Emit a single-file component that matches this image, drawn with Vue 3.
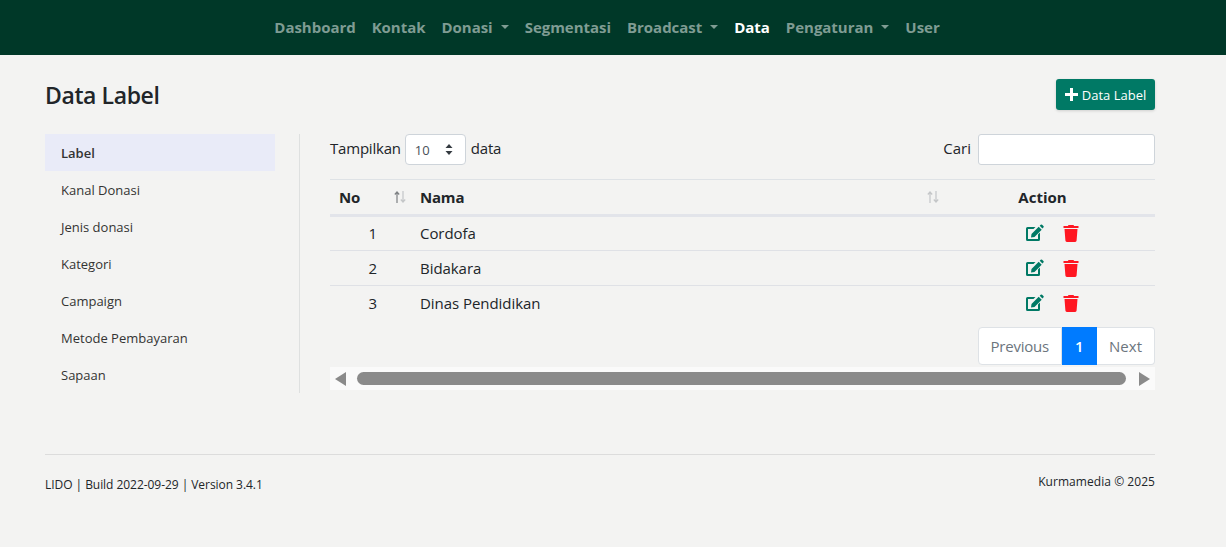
<script setup>
const nav = [
  { t: 'Dashboard' }, { t: 'Kontak' }, { t: 'Donasi', c: 1 }, { t: 'Segmentasi' },
  { t: 'Broadcast', c: 1 }, { t: 'Data', a: 1 }, { t: 'Pengaturan', c: 1 }, { t: 'User' }
]
const side = ['Label', 'Kanal Donasi', 'Jenis donasi', 'Kategori', 'Campaign', 'Metode Pembayaran', 'Sapaan']
const rows = [[1, 'Cordofa'], [2, 'Bidakara'], [3, 'Dinas Pendidikan']]
</script>

<template>
  <div class="page">
    <nav class="nav">
      <a v-for="n in nav" :key="n.t" class="nav-link" :class="{ active: n.a }">
        {{ n.t }}<i v-if="n.c" class="caret"></i>
      </a>
    </nav>
    <main class="wrap">
      <header class="head">
        <h1>Data Label</h1>
        <button class="add">
          <svg width="13" height="13" viewBox="0 0 13 13"><path d="M5 0h3v5h5v3H8v5H5V8H0V5h5z" fill="#fff" /></svg>
          Data Label
        </button>
      </header>
      <div class="body">
        <aside class="side">
          <a v-for="(s, i) in side" :key="s" class="side-item" :class="{ on: i === 0 }">{{ s }}</a>
        </aside>
        <section class="content">
          <div class="tools">
            <div class="len">
              <span>Tampilkan</span>
              <span class="select">10
                <svg width="8" height="11" viewBox="0 0 8 11"><path d="M4 0l3.500 4H.5zM4 11L.5 7h7z" fill="#343a40" /></svg>
              </span>
              <span class="after">data</span>
            </div>
            <div class="search">
              <span class="cari">Cari</span>
              <span class="input"></span>
            </div>
          </div>
          <table>
            <thead>
              <tr>
                <th class="c-no">No
                  <svg class="sort" width="12" height="12" viewBox="0 0 12 12" fill="none" stroke-width="1.200">
                    <path d="M3 12V1M.8 3.500L3 1l2.200 2.500" stroke="#7d8083" />
                    <path d="M9 0v11M6.800 8.500L9 11l2.200-2.500" stroke="#c4c6c8" />
                  </svg>
                </th>
                <th class="c-name">Nama
                  <svg class="sort" width="12" height="12" viewBox="0 0 12 12" fill="none" stroke="#c4c6c8" stroke-width="1.200">
                    <path d="M3 12V1M.8 3.500L3 1l2.200 2.500" />
                    <path d="M9 0v11M6.800 8.500L9 11l2.200-2.500" />
                  </svg>
                </th>
                <th class="c-act">Action</th>
              </tr>
            </thead>
            <tbody>
              <tr v-for="r in rows" :key="r[0]">
                <td class="num">{{ r[0] }}</td>
                <td>{{ r[1] }}</td>
                <td>
                  <div class="acts">
                    <svg width="19" height="18" viewBox="0 0 19 18">
                      <path d="M2 3h8.500l-2 2H3v10h10v-4.500l2-2V15.500a1.500 1.500 0 0 1-1.500 1.500h-11A1.500 1.500 0 0 1 1 15.500v-11A1.500 1.500 0 0 1 2.500 3z" fill="#007965" />
                      <path d="M13.700 2.800l3 3L9.500 13l-3.500.500.500-3.500zM14.700 1.800l1-1a1 1 0 0 1 1.400 0l1.300 1.300a1 1 0 0 1 0 1.400l-1 1z" fill="#007965" />
                    </svg>
                    <svg width="16" height="18" viewBox="0 0 16 18">
                      <path d="M5.500 1h5l.6 1H15.500v2H.5V2h4.400zM1.500 5h13l-.9 11.500a1.500 1.500 0 0 1-1.500 1.400H3.900a1.500 1.500 0 0 1-1.500-1.400z" fill="#ff1722" />
                    </svg>
                  </div>
                </td>
              </tr>
            </tbody>
          </table>
          <div class="pager">
            <a>Previous</a><a class="cur">1</a><a>Next</a>
          </div>
          <div class="scrollbar">
            <svg width="13" height="14" viewBox="0 0 13 14"><path d="M12 0v14L1 7z" fill="#8a8a8a" /></svg>
            <div class="thumb"></div>
            <svg width="13" height="14" viewBox="0 0 13 14"><path d="M1 0v14l11-7z" fill="#8a8a8a" /></svg>
          </div>
        </section>
      </div>
      <footer class="foot">
        <span class="fl">LIDO | Build 2022-09-29 | Version 3.4.1</span>
        <span class="fr">Kurmamedia © 2025</span>
      </footer>
    </main>
  </div>
</template>

<style>
html, body { margin: 0; background: #f3f3f2; }
</style>

<style scoped>
.page { min-height: 547px; background: #f3f3f2; color: #212529; font-family: "Open Sans", "Noto Sans", sans-serif; font-size: 15px; }
.nav { height: 55px; background: #003828; display: flex; align-items: center; justify-content: center; padding: 0 12px 2px 0; box-sizing: border-box; }
.nav-link { color: #7f9c93; font-weight: 700; font-size: 15px; letter-spacing: -.03px; padding: 0 8px; display: flex; align-items: center; white-space: nowrap; }
.nav-link.active { color: #fff; }
.caret { display: inline-block; margin-left: 8px; border-top: 4px solid #7f9c93; border-left: 4px solid transparent; border-right: 4px solid transparent; }
.wrap { width: 1110px; margin-left: 45px; }
.head { display: flex; justify-content: space-between; align-items: center; padding-top: 24px; height: 31px; margin-bottom: 24px; }
h1 { margin: 0; font-size: 23px; font-weight: 600; letter-spacing: -.4px; color: #212529; }
.add { width: 99px; height: 31px; background: #007965; color: #fff; border: 0; border-radius: 3px; font: 13px "Open Sans", sans-serif; display: flex; align-items: center; justify-content: center; gap: 4px; padding: 0; box-shadow: 0 1px 3px rgba(0,0,0,.15); white-space: nowrap; }
.body { display: flex; }
.side { width: 255px; border-right: 1px solid #dee0e0; height: 259px; padding-right: 24px; flex: none; box-sizing: border-box; display: flex; flex-direction: column; }
.side-item { height: 37px; line-height: 39px; padding-left: 16px; font-size: 13px; color: #333; white-space: nowrap; }
.side-item.on { background: #e9ebf8; font-weight: 600; }
.content { margin-left: 30px; width: 825px; }
.tools { display: flex; justify-content: space-between; align-items: center; height: 31px; margin-bottom: 14px; }
.len, .search { display: flex; align-items: center; }
.len { gap: 4px; line-height: 28px; }
.len > span:first-child, .len > span:last-child { letter-spacing: -.2px; margin-top: -3px; }
.len > .after { letter-spacing: 0; margin-left: 1px; }
.select { width: 61px; height: 31px; box-sizing: border-box; border: 1px solid #ced4da; background: #fff; border-radius: 4px; display: flex; align-items: center; justify-content: space-between; padding: 0 12px 0 9px; font-size: 13px; color: #495057; }
.search { gap: 7px; }
.cari { margin-top: -3px; line-height: 28px; }
.input { width: 177px; height: 31px; box-sizing: border-box; border: 1px solid #ced4da; background: #fff; border-radius: 3px; display: block; }
table { width: 825px; border-collapse: separate; border-spacing: 0; table-layout: fixed; }
th { height: 38px; padding: 0 0 1px; border-top: 1px solid #dee2e6; border-bottom: 3px solid #e2e4ea; font-weight: 700; text-align: left; position: relative; box-sizing: border-box; letter-spacing: -.2px; }
.c-no { width: 90px; padding-left: 9px; box-sizing: border-box; }
.c-name { width: 530px; }
.c-act { text-align: center; padding-right: 20px; letter-spacing: 0; }
.sort { position: absolute; top: 11px; }
.c-name .sort { right: 11px; }
.c-no .sort { right: 14px; }
td { height: 35px; padding: 0 0 1px; border-bottom: 1px solid #dfe1e6; box-sizing: border-box; letter-spacing: -.05px; }
tbody tr:first-child td { height: 34px; padding-bottom: 2px; }
tbody tr:last-child td { border-bottom: 0; padding-bottom: 2px; }
.num { text-align: right; padding-right: 43px; }
.acts { display: flex; justify-content: center; gap: 19px; align-items: center; padding-right: 2px; }
.pager { display: flex; justify-content: flex-end; margin-top: 6px; height: 38px; }
.pager a { padding: 0 12px; background: #fff; border: 1px solid #dee2e6; border-left: 0; color: #6c757d; line-height: 36px; letter-spacing: -.2px; }
.pager a:first-child { border-left: 1px solid #dee2e6; border-radius: 4px 0 0 4px; padding-left: 11px; }
.pager a:last-child { border-radius: 0 4px 4px 0; letter-spacing: 0; }
.pager a.cur { background: #007bff; color: #fff; font-weight: 600; border-color: #007bff; width: 35px; padding: 0; text-align: center; box-sizing: border-box; }
.scrollbar { height: 23px; margin-top: 2px; background: #fafafa; display: flex; align-items: center; padding: 0 4px; }
.thumb { flex: 1; height: 13px; background: #8a8a8a; border-radius: 7px; margin: 0 12px 0 10px; }
.foot { margin-top: 61px; border-top: 1px solid #dcdcdc; display: flex; justify-content: space-between; padding-top: 18px; font-size: 12px; color: #212529; }
.fl { margin-top: 3px; letter-spacing: -.05px; }
.fr { letter-spacing: .05px; }
</style>
